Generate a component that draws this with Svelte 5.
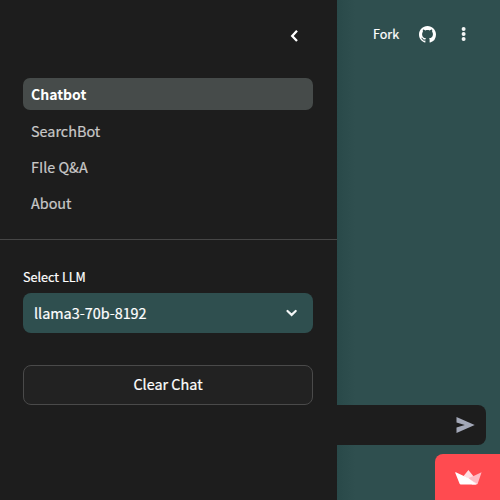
<script>
  const pages = ['Chatbot', 'SearchBot', 'FIle Q&A', 'About'];
  let active = $state('Chatbot');
</script>

<div class="app">
  <aside class="sidebar">
    <header class="collapse">
      <button class="icon-button" aria-label="Collapse sidebar">
        <svg width="18" height="18" viewBox="0 0 18 18">
          <path d="M11 3.8 6.2 9l4.8 5" fill="none" stroke="#fff" stroke-width="2.3" />
        </svg>
      </button>
    </header>
    <nav>
      {#each pages as page}
        <button class="page" class:active={page === active} onclick={() => (active = page)}>
          <span>{page}</span>
        </button>
      {/each}
    </nav>
    <section class="controls">
      <span class="label">Select LLM</span>
      <div class="select">
        <span>llama3-70b-8192</span>
        <svg width="18" height="18" viewBox="0 0 18 18">
          <path d="m4.5 7 4.1 3.9L12.7 7" fill="none" stroke="#f4f6f6" stroke-width="2.2" stroke-linecap="round" />
        </svg>
      </div>
      <button class="clear">Clear Chat</button>
    </section>
  </aside>

  <main>
    <header class="toolbar">
      <span class="fork">Fork</span>
      <svg class="github" width="17" height="17" viewBox="0 0 16 16" fill="#fff">
        <path d="M8 0C3.58 0 0 3.58 0 8c0 3.54 2.29 6.53 5.47 7.59.4.07.55-.17.55-.38 0-.19-.01-.82-.01-1.49-2.01.37-2.53-.49-2.69-.94-.09-.23-.48-.94-.82-1.13-.28-.15-.68-.52-.01-.53.63-.01 1.08.58 1.23.82.72 1.21 1.87.87 2.33.66.07-.52.28-.87.51-1.07-1.78-.2-3.64-.89-3.64-3.95 0-.87.31-1.59.82-2.15-.08-.2-.36-1.02.08-2.12 0 0 .67-.21 2.2.82.64-.18 1.32-.27 2-.27s1.36.09 2 .27c1.53-1.04 2.2-.82 2.2-.82.44 1.1.16 1.92.08 2.12.51.56.82 1.27.82 2.15 0 3.07-1.87 3.75-3.65 3.95.29.25.54.73.54 1.48 0 1.07-.01 1.93-.01 2.2 0 .21.15.46.55.38A8.01 8.01 0 0 0 16 8c0-4.42-3.58-8-8-8z" />
      </svg>
      <svg class="more" width="6" height="16" viewBox="0 0 6 16" fill="#f4f6f6">
        <circle cx="2.6" cy="3" r="2" /><circle cx="2.6" cy="8" r="2" /><circle cx="2.6" cy="13" r="2" />
      </svg>
    </header>
    <footer>
      <div class="chat-input">
        <svg width="19" height="16" viewBox="0 0 19 16">
          <path d="M.5 0 18.7 8 .5 16v-5.6L8.8 8 .5 5.6z" fill="#a3a8b8" />
        </svg>
      </div>
      <div class="badge">
        <svg width="27" height="15" viewBox="0 0 27 15">
          <path d="M13.4 0 8.4 6.2 14 9l5.3-1.8z" fill="#ffdde2" />
          <path d="M26.6 2.2 18.6 6 13 8.2l9.5 6z" fill="#ffbac3" />
          <path d="m12.6 7.8 9.8 6q-.3.7-1.2.7H17z" fill="#ffe8eb" />
          <path d="M.2 2.8C0 2.3.3 2 .8 2.2l12.8 6 7.6 6.3H5.8q-.9 0-1.2-.8z" fill="#fff" />
        </svg>
      </div>
    </footer>
  </main>
</div>

<style>
  .app {
    display: flex;
    width: 500px;
    height: 500px;
    overflow: hidden;
    background: #2f4f4f;
    color: #fff;
    font-family: 'Noto Sans CJK SC', 'Noto Sans', sans-serif;
    font-size: 14.4px;
    line-height: 20px;
    -webkit-text-stroke: 0.2px currentColor;
  }
  button {
    font: inherit;
    color: inherit;
    border: 0;
    padding: 0;
    background: none;
    text-align: left;
  }
  svg { display: block; flex: none; }
  .sidebar {
    box-sizing: border-box;
    width: 337px;
    flex: none;
    background: #1d1d1d;
  }
  .collapse {
    box-sizing: border-box;
    display: flex;
    justify-content: flex-end;
    height: 78px;
    padding: 27px 33px 0 0;
  }
  .icon-button { height: 18px; }
  nav {
    box-sizing: border-box;
    display: flex;
    flex-direction: column;
    gap: 4.2px;
    height: 162px;
    padding: 0.3px 24px 0 23px;
    border-bottom: 1px solid #464646;
  }
  .page {
    display: flex;
    align-items: center;
    height: 32px;
    flex: none;
    padding: 0 8px;
    border-radius: 7px;
    color: #c8c8c8;
  }
  .page span { padding-top: 1px; }
  .page.active {
    background: #464b4a;
    color: #fff;
    font-size: 14px;
    font-weight: 700;
    -webkit-text-stroke: 0;
  }
  .page.active span { padding-top: 0; }
  .controls {
    display: flex;
    flex-direction: column;
    padding: 27px 24px 0 23px;
  }
  .label { font-size: 12.6px; }
  .select {
    display: flex;
    align-items: center;
    justify-content: space-between;
    height: 40px;
    margin: 6px 0 32px;
    padding: 0 12px 0 11px;
    border-radius: 8px;
    background: #2f4f4f;
  }
  .clear {
    box-sizing: border-box;
    height: 40px;
    padding-bottom: 2px;
    border: 1px solid #4a4a4a;
    border-radius: 8px;
    background: #222;
    text-align: center;
  }
  main {
    flex: 1;
    display: flex;
    flex-direction: column;
    justify-content: space-between;
    background: linear-gradient(90deg, #294949, #2f4f4f 18px);
  }
  .toolbar {
    display: flex;
    align-items: center;
    padding: 24px 33px 0 36px;
    font-size: 12.5px;
  }
  .github { margin-left: auto; margin-right: 25px; }
  footer {
    display: flex;
    flex-direction: column;
    align-items: flex-end;
  }
  .chat-input {
    box-sizing: border-box;
    display: flex;
    align-items: center;
    justify-content: flex-end;
    width: 149px;
    height: 40px;
    margin: 0 14px 9.4px 0;
    padding-right: 11px;
    border-radius: 0 8px 8px 0;
    background: #1d1d1d;
  }
  .badge {
    box-sizing: border-box;
    width: 65px;
    height: 45.6px;
    padding: 16px 0 0 20px;
    border-radius: 8px 0 0 0;
    background: #ff4b50;
  }
</style>
